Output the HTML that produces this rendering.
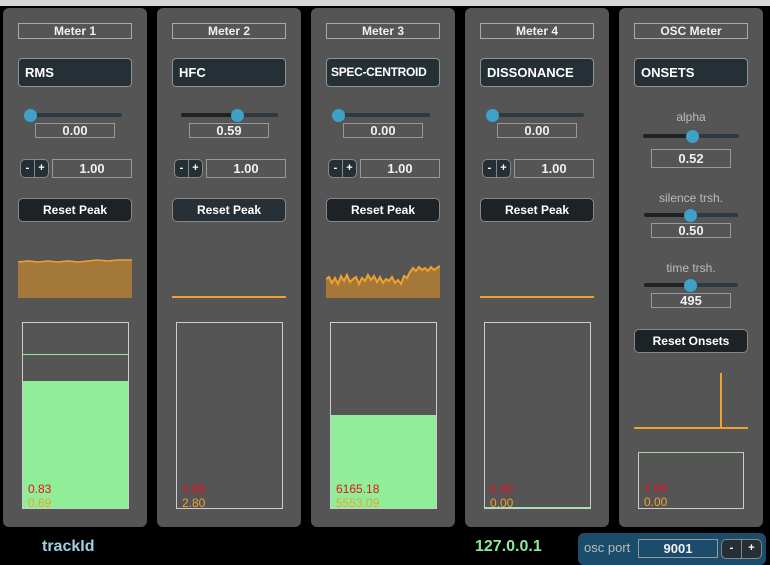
<!DOCTYPE html>
<html><head><meta charset="utf-8"><style>
*{box-sizing:border-box;margin:0;padding:0}
body{width:770px;height:565px;background:#000;position:relative;overflow:hidden;font-family:"Liberation Sans",sans-serif;color:#fff}
.a{position:absolute}
.top{left:0;top:0;width:770px;height:6px;background:#d8d8d8}
.p{top:8px;width:144px;height:519px;background:#555;border-radius:6px}
.lab{height:16px;border:1px solid #aaa;font-size:12px;font-weight:bold;text-align:center;line-height:14px;color:#f0f0f0;white-space:nowrap}
.dd{height:29px;background:#253036;border:1px solid #8a9499;border-radius:4px;font-size:13px;font-weight:bold;line-height:27px;padding-left:6px;white-space:nowrap;overflow:hidden}
.tr{height:4px;border-radius:2px;background:#2c3a41}
.tl{height:4px;border-radius:2px;background:#1d2225}
.kn{width:13px;height:13px;border-radius:50%;background:#3fa0c8}
.vb{border:1px solid #999;font-size:13px;font-weight:bold;text-align:center;color:#f0f0f0}
.pm{width:29px;height:19px;border:1px solid #888;border-radius:5px;background:#253036;font-size:11px;font-weight:bold;display:flex}
.pm span{flex:1;text-align:center;line-height:17px}
.pm span:first-child{border-right:1px solid #888}
.btn{height:24px;background:#1c2226;border:1px solid #888;border-radius:5px;font-size:12px;font-weight:bold;text-align:center;line-height:22px}
.m{border:1px solid #ccc;background:#555;overflow:hidden}
.t1{font-size:12px;color:#e8101a}
.t2{font-size:12px;color:#f0a030}
.cap{font-size:12px;color:#bbb;text-align:center;width:144px}
</style></head><body>
<div class="a top"></div>

<!-- Panel 1 -->
<div class="a p" style="left:3px"></div>
<div class="a lab" style="left:18px;top:23px;width:114px">Meter 1</div>
<div class="a dd" style="left:18px;top:58px;width:114px">RMS</div>
<div class="a tr" style="left:25px;top:113px;width:97px"></div>
<div class="a kn" style="left:24px;top:109px"></div>
<div class="a vb" style="left:35px;top:123px;width:80px;height:15px;line-height:13px">0.00</div>
<div class="a pm" style="left:20px;top:159px"><span>-</span><span>+</span></div>
<div class="a vb" style="left:52px;top:159px;width:80px;height:19px;line-height:17px">1.00</div>
<div class="a btn" style="left:18px;top:198px;width:114px">Reset Peak</div>
<svg class="a" style="left:18px;top:256px" width="114" height="44"><polygon points="0,6 10,5 20,6 30,5 40,6 50,5 60,6 70,5 80,4 90,5 100,4 114,4 114,42 0,42" fill="#a37838"/><polyline points="0,6 10,5 20,6 30,5 40,6 50,5 60,6 70,5 80,4 90,5 100,4 114,4" fill="none" stroke="#f0a030" stroke-width="1.5"/></svg>
<div class="a m" style="left:22px;top:322px;width:107px;height:187px">
 <div class="a" style="left:0;top:31px;width:105px;height:1px;background:#90ee98"></div>
 <div class="a" style="left:0;top:58px;width:105px;height:128px;background:#90ee98"></div>
 <div class="a t1" style="left:5px;top:159px">0.83</div>
 <div class="a t2" style="left:5px;top:173px">0.69</div>
</div>

<!-- Panel 2 -->
<div class="a p" style="left:157px"></div>
<div class="a lab" style="left:172px;top:23px;width:114px">Meter 2</div>
<div class="a dd" style="left:172px;top:58px;width:114px">HFC</div>
<div class="a tr" style="left:181px;top:113px;width:97px"></div>
<div class="a tl" style="left:181px;top:113px;width:56px"></div>
<div class="a kn" style="left:231px;top:109px"></div>
<div class="a vb" style="left:189px;top:123px;width:80px;height:15px;line-height:13px">0.59</div>
<div class="a pm" style="left:174px;top:159px"><span>-</span><span>+</span></div>
<div class="a vb" style="left:206px;top:159px;width:80px;height:19px;line-height:17px">1.00</div>
<div class="a btn" style="left:172px;top:198px;width:114px;background:#263036">Reset Peak</div>
<div class="a" style="left:172px;top:296px;width:114px;height:2px;background:#f0a030"></div>
<div class="a m" style="left:176px;top:322px;width:107px;height:187px">
 <div class="a t1" style="left:5px;top:159px">3.88</div>
 <div class="a t2" style="left:5px;top:173px">2.80</div>
</div>

<!-- Panel 3 -->
<div class="a p" style="left:311px"></div>
<div class="a lab" style="left:326px;top:23px;width:114px">Meter 3</div>
<div class="a dd" style="left:326px;top:58px;width:114px;font-size:12px;padding-left:4px;letter-spacing:-0.3px">SPEC-CENTROID</div>
<div class="a tr" style="left:333px;top:113px;width:97px"></div>
<div class="a kn" style="left:332px;top:109px"></div>
<div class="a vb" style="left:343px;top:123px;width:80px;height:15px;line-height:13px">0.00</div>
<div class="a pm" style="left:328px;top:159px"><span>-</span><span>+</span></div>
<div class="a vb" style="left:360px;top:159px;width:80px;height:19px;line-height:17px">1.00</div>
<div class="a btn" style="left:326px;top:198px;width:114px">Reset Peak</div>
<svg class="a" style="left:326px;top:262px" width="114" height="38"><polygon points="0,17 3,15 6,21 9,16 12,22 15,14 18,19 21,13 24,20 27,17 30,15 33,22 36,16 39,19 42,13 45,18 48,14 51,20 54,15 57,21 60,17 63,19 66,15 69,21 72,18 75,22 78,14 81,16 84,10 87,6 90,9 93,5 96,8 99,6 102,9 105,5 108,8 111,6 114,4 114,36 0,36" fill="#a37838"/><polyline points="0,17 3,15 6,21 9,16 12,22 15,14 18,19 21,13 24,20 27,17 30,15 33,22 36,16 39,19 42,13 45,18 48,14 51,20 54,15 57,21 60,17 63,19 66,15 69,21 72,18 75,22 78,14 81,16 84,10 87,6 90,9 93,5 96,8 99,6 102,9 105,5 108,8 111,6 114,4" fill="none" stroke="#f0a030" stroke-width="2"/></svg>
<div class="a m" style="left:330px;top:322px;width:107px;height:187px">
 <div class="a" style="left:0;top:92px;width:105px;height:94px;background:#90ee98"></div>
 <div class="a t1" style="left:5px;top:159px">6165.18</div>
 <div class="a t2" style="left:5px;top:173px">5553.09</div>
</div>

<!-- Panel 4 -->
<div class="a p" style="left:465px"></div>
<div class="a lab" style="left:480px;top:23px;width:114px">Meter 4</div>
<div class="a dd" style="left:480px;top:58px;width:114px">DISSONANCE</div>
<div class="a tr" style="left:487px;top:113px;width:97px"></div>
<div class="a kn" style="left:486px;top:109px"></div>
<div class="a vb" style="left:497px;top:123px;width:80px;height:15px;line-height:13px">0.00</div>
<div class="a pm" style="left:482px;top:159px"><span>-</span><span>+</span></div>
<div class="a vb" style="left:514px;top:159px;width:80px;height:19px;line-height:17px">1.00</div>
<div class="a btn" style="left:480px;top:198px;width:114px">Reset Peak</div>
<div class="a" style="left:480px;top:296px;width:114px;height:2px;background:#f0a030"></div>
<div class="a m" style="left:484px;top:322px;width:107px;height:187px">
 <div class="a" style="left:0;top:184px;width:105px;height:2px;background:#90ee98"></div>
 <div class="a t1" style="left:5px;top:159px">0.00</div>
 <div class="a t2" style="left:5px;top:173px">0.00</div>
</div>

<!-- Panel 5 -->
<div class="a p" style="left:619px"></div>
<div class="a lab" style="left:634px;top:23px;width:114px">OSC Meter</div>
<div class="a dd" style="left:634px;top:58px;width:114px">ONSETS</div>
<div class="a cap" style="left:619px;top:110px">alpha</div>
<div class="a tr" style="left:643px;top:134px;width:96px"></div>
<div class="a tl" style="left:643px;top:134px;width:49px"></div>
<div class="a kn" style="left:686px;top:130px"></div>
<div class="a vb" style="left:651px;top:149px;width:80px;height:19px;line-height:17px">0.52</div>
<div class="a cap" style="left:619px;top:191px">silence trsh.</div>
<div class="a tr" style="left:644px;top:213px;width:94px"></div>
<div class="a tl" style="left:644px;top:213px;width:46px"></div>
<div class="a kn" style="left:684px;top:209px"></div>
<div class="a vb" style="left:651px;top:223px;width:80px;height:15px;line-height:13px">0.50</div>
<div class="a cap" style="left:619px;top:261px">time trsh.</div>
<div class="a tr" style="left:644px;top:283px;width:94px"></div>
<div class="a tl" style="left:644px;top:283px;width:46px"></div>
<div class="a kn" style="left:684px;top:279px"></div>
<div class="a vb" style="left:651px;top:293px;width:80px;height:15px;line-height:13px">495</div>
<div class="a btn" style="left:634px;top:329px;width:114px">Reset Onsets</div>
<div class="a" style="left:634px;top:427px;width:114px;height:2px;background:#f0a030"></div>
<div class="a" style="left:720px;top:373px;width:2px;height:55px;background:#f0a030"></div>
<div class="a m" style="left:638px;top:452px;width:106px;height:57px;border-top-color:#a8d8a8">
 <div class="a t1" style="left:5px;top:28px">1.00</div>
 <div class="a t2" style="left:5px;top:42px">0.00</div>
</div>

<!-- Footer -->
<div class="a" style="left:42px;top:538px;font-size:16px;font-weight:bold;color:#9fcfe0">trackId</div>
<div class="a" style="left:475px;top:538px;font-size:16px;font-weight:bold;color:#8ee89a">127.0.0.1</div>
<div class="a" style="left:578px;top:533px;width:188px;height:32px;background:#1b4c6c;border-radius:6px"></div>
<div class="a" style="left:584px;top:540px;font-size:13px;color:#bbb">osc port</div>
<div class="a vb" style="left:638px;top:539px;width:80px;height:19px;line-height:17px;font-size:13px">9001</div>
<div class="a pm" style="left:721px;top:539px;width:41px;height:20px"><span>-</span><span>+</span></div>
</body></html>
